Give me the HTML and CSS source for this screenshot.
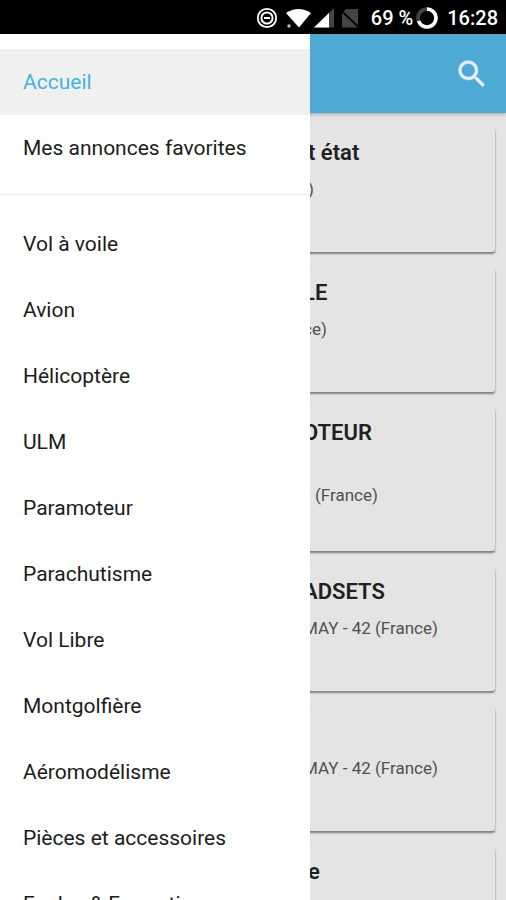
FILE: index.html
```html
<!DOCTYPE html>
<html lang="fr">
<head>
<meta charset="utf-8">
<meta name="viewport" content="width=device-width, initial-scale=1">
<title>Accueil</title>
<link rel="stylesheet" href="styles.css">
</head>
<body>
<div class="status">
  <svg class="status-icons" width="108" height="24" viewBox="0 0 108 24" aria-hidden="true">
    <circle cx="11" cy="12" r="9.2" fill="none" stroke="#fff" stroke-width="1.8"/>
    <circle cx="11" cy="12" r="5.6" fill="none" stroke="#fff" stroke-width="2"/>
    <path d="M8 12h6" stroke="#fff" stroke-width="2"/>
    <path d="M30 7Q42.500-1 55 7L43 21.500Z" fill="#fff"/>
    <circle cx="33" cy="20" r="1.700" fill="#bbb"/>
    <path d="M58 21.500L78 2v19.500Z" fill="#444"/>
    <path d="M58 21.500L73 7v14.500Z" fill="#fff"/>
    <path d="M90 3h12v18.500H86V7Z" fill="#444"/>
    <path d="M84 3.500l19 18" stroke="#000" stroke-width="2"/>
  </svg>
  <span class="battery">69 %</span>
  <svg class="ring" width="22" height="24" viewBox="0 0 22 24" aria-hidden="true">
    <circle cx="11" cy="12" r="9" fill="none" stroke="#444" stroke-width="3.600"/>
    <path d="M11 3A9 9 0 1 1 2.500 15" fill="none" stroke="#fff" stroke-width="3.600"/>
  </svg>
  <span class="clock">16:28</span>
</div>
<div class="screen">
  <header class="toolbar">
    <button class="search" type="button" aria-label="Rechercher">
      <svg width="36" height="36" viewBox="0 0 24 24" aria-hidden="true"><path fill="currentColor" stroke="currentColor" stroke-width=".3" d="M15.500 14h-.79l-.28-.27A6.471 6.471 0 0 0 16 9.500 6.500 6.500 0 1 0 9.500 16c1.610 0 3.090-.59 4.230-1.570l.27.28v.79l5 4.990L20.490 19l-4.990-5zm-6 0C7.010 14 5 11.990 5 9.500S7.010 5 9.500 5 14 7.010 14 9.500 11.990 14 9.500 14z"/></svg>
    </button>
  </header>
  <main class="cards">
    <article class="card"><h2 class="indent">t état</h2><p class="indent">)</p></article>
    <article class="card"><h2>LE</h2><p>ce)</p></article>
    <article class="card tall"><h2 class="two-lines">OTEUR</h2><p class="indent-wide">(France)</p></article>
    <article class="card"><h2>ADSETS</h2><p>MAY - 42 (France)</p></article>
    <article class="card"><div class="blank-title"></div><p>MAY - 42 (France)</p></article>
    <article class="card"><h2 class="indent">e</h2></article>
  </main>
  <nav class="drawer">
    <ul class="group">
      <li><a class="active" href="#accueil">Accueil</a></li>
      <li><a href="#favorites">Mes annonces favorites</a></li>
    </ul>
    <ul class="group">
      <li><a href="#voile">Vol à voile</a></li>
      <li><a href="#avion">Avion</a></li>
      <li><a href="#helicoptere">Hélicoptère</a></li>
      <li><a href="#ulm">ULM</a></li>
      <li><a href="#paramoteur">Paramoteur</a></li>
      <li><a href="#parachutisme">Parachutisme</a></li>
      <li><a href="#vol-libre">Vol Libre</a></li>
      <li><a href="#montgolfiere">Montgolfière</a></li>
      <li><a href="#aeromodelisme">Aéromodélisme</a></li>
      <li><a href="#pieces">Pièces et accessoires</a></li>
      <li><a href="#ecoles">Ecoles &amp; Formation</a></li>
    </ul>
  </nav>
</div>
</body>
</html>
```
FILE: styles.css
```css
* { box-sizing: border-box; }

body {
  margin: 0;
  height: 100vh;
  overflow: hidden;
  display: flex;
  flex-direction: column;
  font-family: Roboto, "Liberation Sans", sans-serif;
  background: #e4e4e4;
  color: #212121;
}

.status {
  flex: none;
  display: flex;
  align-items: center;
  justify-content: flex-end;
  height: 34px;
  padding: 2px 8px 0 0;
  background: #000;
  color: #fff;
  font-size: 20px;
  font-weight: 500;
}

.battery { margin-left: 7px; }
.ring { margin: 0 9px 0 3px; }

.screen {
  position: relative;
  flex: 1;
  min-height: 0;
  overflow: hidden;
}

.toolbar {
  display: flex;
  align-items: center;
  justify-content: flex-end;
  height: 79px;
  padding-right: 16px;
  background: #4fa9d5;
  box-shadow: 0 1px 4px rgba(0, 0, 0, 0.3);
}

.search {
  display: flex;
  padding: 0;
  border: 0;
  background: none;
  color: #e4eef4;
}

.cards {
  display: flex;
  flex-direction: column;
  gap: 16px;
  padding: 15px 11px;
}

.card {
  flex: none;
  height: 124px;
  padding: 12px 16px 0 292px;
  border-radius: 3px;
  background: #e4e4e4;
  box-shadow: 0 2px 2px rgba(0, 0, 0, 0.4), 0 1px 3px rgba(0, 0, 0, 0.1);
}

.tall { height: 143px; }

.card h2 {
  margin: 0 0 10px;
  font-size: 22px;
  line-height: 26px;
  font-weight: 600;
}

.card .two-lines { min-height: 52px; }
.blank-title { height: 36px; }

.card p {
  margin: 0;
  font-size: 17px;
  line-height: 26px;
  color: #505050;
}

.card .indent { padding-left: 5px; }
.card .indent-wide { padding-left: 12px; }

.drawer {
  position: absolute;
  inset: 0 auto 0 0;
  width: 310px;
  overflow: hidden;
  background: #fff;
}

.group {
  margin: 0;
  padding: 15px 0 13px;
  list-style: none;
}

.group + .group {
  padding-top: 16px;
  border-top: 1px solid #ececec;
}

.group a {
  display: block;
  padding: 0 23px;
  font-size: 21px;
  line-height: 66px;
  color: #1c1c1c;
  text-decoration: none;
}

.group .active {
  background: #f0f0f0;
  color: #45b2e2;
}
```
